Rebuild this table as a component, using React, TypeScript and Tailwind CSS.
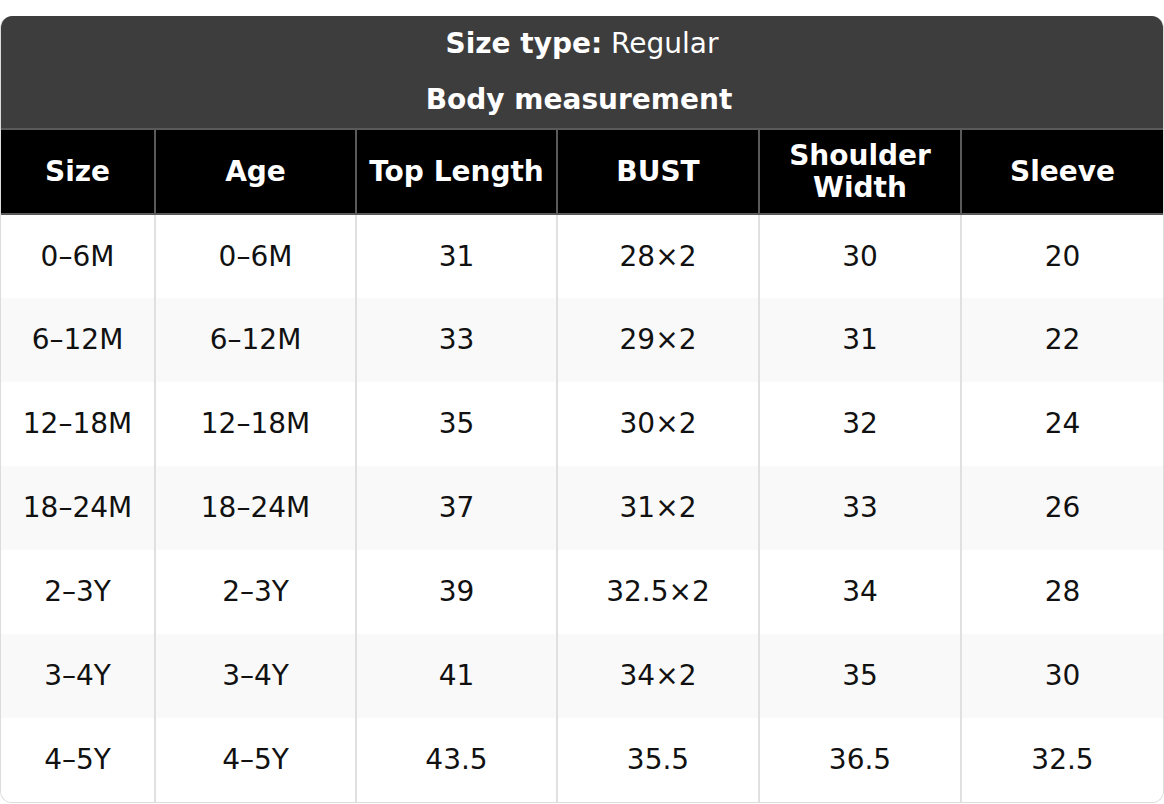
import React from "react";

const rows = [
  ["0–6M", "0–6M", "31", "28×2", "30", "20"],
  ["6–12M", "6–12M", "33", "29×2", "31", "22"],
  ["12–18M", "12–18M", "35", "30×2", "32", "24"],
  ["18–24M", "18–24M", "37", "31×2", "33", "26"],
  ["2–3Y", "2–3Y", "39", "32.5×2", "34", "28"],
  ["3–4Y", "3–4Y", "41", "34×2", "35", "30"],
  ["4–5Y", "4–5Y", "43.5", "35.5", "36.5", "32.5"],
];

const heads = ["Size", "Age", "Top Length", "BUST", "Shoulder Width", "Sleeve"];

export default function App() {
  return (
    <div className="w-[1164px] pt-[16px] bg-white" style={{ fontFamily: '"DejaVu Sans", sans-serif' }}>
      <div className="rounded-[12px] overflow-hidden border border-[#dcdcdc] border-t-0">
        <div className="bg-[#3d3d3d] text-white text-[28px] leading-[32px]">
          <div className="h-[56px] flex items-center justify-center">
            <span className="font-bold">Size type:</span>
            <span>&nbsp;Regular</span>
          </div>
          <div className="h-[56px] flex items-center justify-center font-bold pr-[6px]">Body measurement</div>
        </div>
        <table className="w-full border-collapse table-fixed text-[28px]">
          <colgroup>
            <col className="w-[154px]" />
            <col className="w-[201px]" />
            <col className="w-[201px]" />
            <col className="w-[202px]" />
            <col className="w-[202px]" />
            <col />
          </colgroup>
          <thead>
            <tr>
              {heads.map((h, i) => (
                <th
                  key={i}
                  className="bg-black text-white font-bold leading-[32px] h-[85px] border-2 border-[#5a5a5a] border-l-0 last:border-r-0 align-middle px-2 text-center"
                >
                  {h === "Shoulder Width" ? (
                    <>
                      Shoulder
                      <br />
                      Width
                    </>
                  ) : (
                    h
                  )}
                </th>
              ))}
            </tr>
          </thead>
          <tbody>
            {rows.map((r, ri) => (
              <tr key={ri} className={ri % 2 === 1 ? "bg-[#f9f9f9]" : "bg-white"}>
                {r.map((c, ci) => (
                  <td
                    key={ci}
                    className="h-[84px] text-center align-middle text-[#111] border-r-2 border-[#e0e0e0] last:border-r-0"
                  >
                    {c}
                  </td>
                ))}
              </tr>
            ))}
          </tbody>
        </table>
      </div>
    </div>
  );
}
